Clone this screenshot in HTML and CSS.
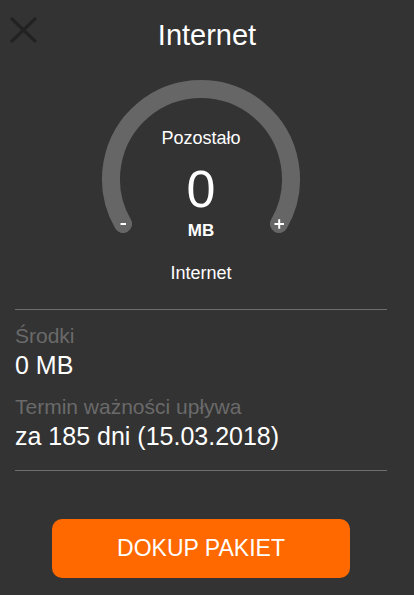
FILE: index.html
```html
<!DOCTYPE html>
<html lang="pl">
<head>
  <meta charset="UTF-8">
  <meta name="viewport" content="width=device-width, initial-scale=1.0">
  <title>Internet</title>
  <link rel="stylesheet" href="styles.css">
</head>
<body>

  <header class="top-bar">
    <button class="close-btn" aria-label="Zamknij">
      <svg width="27" height="26" viewBox="0 0 27 26">
        <path d="M1 1 L26 25 M26 1 L1 25" stroke="#222" stroke-width="3.2" fill="none"/>
      </svg>
    </button>
    <h1 class="title">Internet</h1>
  </header>

  <main class="content">
    <div class="gauge-wrap">
      <div class="gauge">
        <svg class="gauge-arc" width="218" height="170" viewBox="0 0 218 170">
          <path d="M31.06 154 A90 90 0 1 1 186.94 154" stroke="#666" stroke-width="18" stroke-linecap="round" fill="none"/>
          <!-- minus / plus on the arc ends -->
          <path d="M28.5 154 H34" stroke="#fff" stroke-width="2"/>
          <path d="M182.5 154 H192 M187.2 149.3 V158.7" stroke="#fff" stroke-width="2"/>
        </svg>
        <div class="gauge-label">Pozostało</div>
        <div class="gauge-value">0</div>
        <div class="gauge-unit">MB</div>
        <div class="gauge-name">Internet</div>
      </div>
    </div>

    <section class="details">
      <div class="detail-label">Środki</div>
      <div class="detail-value">0 MB</div>
      <div class="detail-label second">Termin ważności upływa</div>
      <div class="detail-value">za 185 dni (15.03.2018)</div>
    </section>

    <button class="buy-btn" type="button">DOKUP PAKIET</button>
  </main>

</body>
</html>
```

FILE: styles.css
```css
body {
  margin: 0;
  background-color: #333333;
  color: #ffffff;
  font-family: "Liberation Sans", Arial, sans-serif;
}
.top-bar {
  display: grid;
  grid-template-columns: 48px 1fr 48px;
  height: 70px;
}
.close-btn {
  align-self: start;
  margin: 17px 0 0 10px;
  padding: 0;
  width: 27px;
  height: 26px;
  background: none;
  border: none;
  cursor: pointer;
}
.close-btn svg {
  display: block;
}
.title {
  margin: 0;
  font-size: 29px;
  font-weight: normal;
  line-height: 70px;
  text-align: center;
}
.content {
  padding-right: 12px;
}
.gauge-wrap {
  display: flex;
  justify-content: center;
}
.gauge {
  position: relative;
  width: 218px;
  display: flex;
  flex-direction: column;
  align-items: center;
  padding-top: 56px;
}
.gauge-arc {
  position: absolute;
  top: 0;
  left: 0;
}
.gauge-label,
.gauge-name {
  position: relative;
  font-size: 18px;
  line-height: 24px;
}
.gauge-value {
  position: relative;
  margin-top: 13px;
  font-size: 52px;
  line-height: 52px;
}
.gauge-unit {
  position: relative;
  margin-top: 6px;
  font-size: 17px;
  font-weight: bold;
  line-height: 20px;
}
.gauge-name {
  margin-top: 20px;
}
.details {
  margin: 24px 15px 0;
  padding: 13px 0 19px;
  border-top: 1px solid #6e6e6e;
  border-bottom: 1px solid #6e6e6e;
}
.detail-label {
  color: #6a6a6a;
  font-size: 21px;
  line-height: 26px;
}
.detail-label.second {
  margin-top: 14px;
}
.detail-value {
  margin-top: 2px;
  font-size: 25px;
  line-height: 29px;
}
.buy-btn {
  display: block;
  width: 298px;
  height: 59px;
  margin: 48px auto 0;
  background-color: #ff6900;
  color: white;
  border: none;
  border-radius: 10px;
  font-family: "Liberation Sans", Arial, sans-serif;
  font-size: 23px;
  cursor: pointer;
}
```
